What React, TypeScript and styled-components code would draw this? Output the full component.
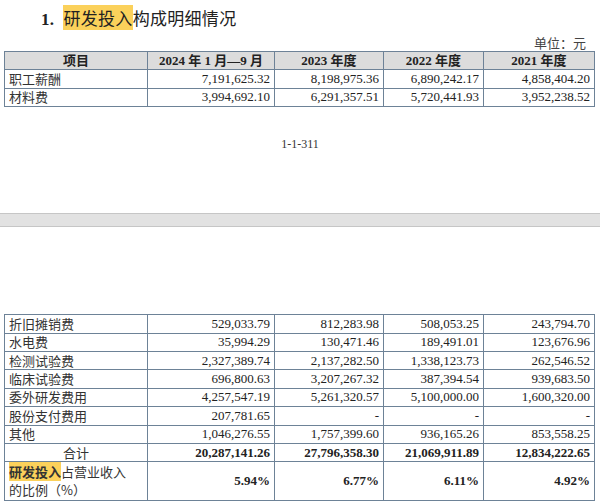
import styled, { createGlobalStyle } from 'styled-components'

const Global = createGlobalStyle`
    body { margin: 0; background: #fff; overflow: hidden; }
    * { box-sizing: border-box; }
`

const PageS = styled.div`
    width: 600px;
    height: 501px;
    overflow: hidden;
    font-family: "Liberation Serif", "Noto Sans CJK SC", serif;
    color: #222;
`

const TitleS = styled.h2`
    margin: 0;
    padding: 5px 0 0 41px;
    height: 34px;
    font-size: 17px;
    font-weight: bold;
    letter-spacing: 0.3px;
`

const MarkS = styled.span`
    background: #fbd15b;
    font-family: "Noto Sans CJK SC", sans-serif;
    font-weight: normal;
`

const CnS = styled.span`
    font-family: "Noto Sans CJK SC", sans-serif;
    font-weight: normal;
`

const UnitS = styled.div`
    text-align: right;
    padding-right: 14px;
    font-size: 13px;
    height: 17px;
    line-height: 17px;
    font-family: "Noto Sans CJK SC", sans-serif;
    color: #444;
`

const TableS = styled.table`
    border-collapse: collapse;
    margin-left: 4px;
    width: 590px;
    table-layout: fixed;
    font-size: 13px;
    td, th {
        border: 1px solid #6d8297;
        padding: 0 4px;
        height: 18.4px;
        line-height: 16px;
        white-space: nowrap;
    }
`

const HeadRowS = styled.tr`
    background: #dcdcdc;
    th { font-weight: bold; text-align: center; }
`

const LabelS = styled.td<{ center?: boolean }>`
    font-family: "Noto Sans CJK SC", sans-serif;
    text-align: ${ ({ center }) => center ? 'center' : 'left' };
    color: #333;
`

const NumS = styled.td<{ bold?: boolean }>`
    text-align: right;
    font-weight: ${ ({ bold }) => bold ? 'bold' : 'normal' };
`

const PageNoS = styled.div`
    text-align: center;
    font-size: 12px;
    margin-top: 30px;
    height: 60px;
    color: #333;
`

const GapBarS = styled.div`
    margin-top: 16px;
    height: 14px;
    background: #e2e2e2;
    border-top: 1px solid #c6c6c6;
    border-bottom: 1px solid #c6c6c6;
`

const SpacerS = styled.div`
    height: 87px;
`

const RatioLabelS = styled.td`
    font-family: "Noto Sans CJK SC", sans-serif;
    line-height: 18px !important;
    white-space: nowrap;
    padding: 1px 4px !important;
    color: #333;
`

const cols = ['143px', '127px', '109px', '100px', '111px']

const top = [
    ['职工薪酬', '7,191,625.32', '8,198,975.36', '6,890,242.17', '4,858,404.20'],
    ['材料费', '3,994,692.10', '6,291,357.51', '5,720,441.93', '3,952,238.52'],
]

const rows = [
    ['折旧摊销费', '529,033.79', '812,283.98', '508,053.25', '243,794.70'],
    ['水电费', '35,994.29', '130,471.46', '189,491.01', '123,676.96'],
    ['检测试验费', '2,327,389.74', '2,137,282.50', '1,338,123.73', '262,546.52'],
    ['临床试验费', '696,800.63', '3,207,267.32', '387,394.54', '939,683.50'],
    ['委外研发费用', '4,257,547.19', '5,261,320.57', '5,100,000.00', '1,600,320.00'],
    ['股份支付费用', '207,781.65', '-', '-', '-'],
    ['其他', '1,046,276.55', '1,757,399.60', '936,165.26', '853,558.25'],
]

const ColGroup = () => (
    <colgroup>
        {cols.map((w, i) => <col key={i} style={{ width: w }} />)}
    </colgroup>
)

const App = () => (
    <PageS>
        <Global />
        <TitleS>1.&nbsp;&nbsp;<MarkS>研发投入</MarkS><CnS>构成明细情况</CnS></TitleS>
        <UnitS>单位：元</UnitS>
        <TableS>
            <ColGroup />
            <tbody>
                <HeadRowS>
                    <th><CnS style={{ fontWeight: 'bold' }}>项目</CnS></th>
                    <th>2024 年 1 月—9 月</th>
                    <th>2023 年度</th>
                    <th>2022 年度</th>
                    <th>2021 年度</th>
                </HeadRowS>
                {top.map(r => (
                    <tr key={r[0]}>
                        <LabelS>{r[0]}</LabelS>
                        {r.slice(1).map((v, i) => <NumS key={i}>{v}</NumS>)}
                    </tr>
                ))}
            </tbody>
        </TableS>
        <PageNoS>1-1-311</PageNoS>
        <GapBarS />
        <SpacerS />
        <TableS>
            <ColGroup />
            <tbody>
                {rows.map(r => (
                    <tr key={r[0]}>
                        <LabelS>{r[0]}</LabelS>
                        {r.slice(1).map((v, i) => <NumS key={i}>{v}</NumS>)}
                    </tr>
                ))}
                <tr>
                    <LabelS center>合计</LabelS>
                    {['20,287,141.26', '27,796,358.30', '21,069,911.89', '12,834,222.65'].map(v =>
                        <NumS bold key={v}>{v}</NumS>
                    )}
                </tr>
                <tr>
                    <RatioLabelS><MarkS style={{ fontWeight: 'bold' }}>研发投入</MarkS>占营业收入<br />的比例（%）</RatioLabelS>
                    {['5.94%', '6.77%', '6.11%', '4.92%'].map(v => <NumS bold key={v}>{v}</NumS>)}
                </tr>
                <tr>
                    <LabelS>&nbsp;</LabelS><NumS /><NumS /><NumS /><NumS />
                </tr>
            </tbody>
        </TableS>
    </PageS>
)

export default App
